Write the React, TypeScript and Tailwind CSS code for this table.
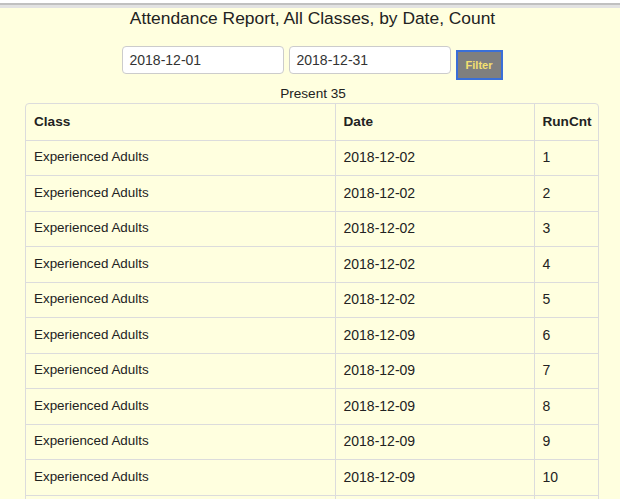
import React from "react";

const rows = [
  ["Experienced Adults", "2018-12-02", "1"],
  ["Experienced Adults", "2018-12-02", "2"],
  ["Experienced Adults", "2018-12-02", "3"],
  ["Experienced Adults", "2018-12-02", "4"],
  ["Experienced Adults", "2018-12-02", "5"],
  ["Experienced Adults", "2018-12-09", "6"],
  ["Experienced Adults", "2018-12-09", "7"],
  ["Experienced Adults", "2018-12-09", "8"],
  ["Experienced Adults", "2018-12-09", "9"],
  ["Experienced Adults", "2018-12-09", "10"],
  ["Experienced Adults", "2018-12-16", "11"],
];

export default function App() {
  return (
    <div
      className="w-[620px] h-[499px] overflow-hidden bg-[#ffffdf] text-[#222]"
      style={{ fontFamily: '"Liberation Sans", Arial, sans-serif' }}
    >
      <div className="h-[3px] bg-white" />
      <div className="h-[2px] bg-[#c0c0c0]" />
      <div className="h-[3px] bg-[#e2e2e2]" />
      <div className="flex flex-col items-center">
        <h1 className="text-[17.4px] leading-[20px] h-[20px] ml-[5px] text-[#222]">
          Attendance Report, All Classes, by Date, Count
        </h1>
        <div className="flex items-start gap-[5px] mt-[18px] ml-[4px]">
          <div className="w-[162px] h-[28px] bg-white border border-[#ccc] rounded-[4px] px-[7px] flex items-center text-[14px] text-[#333]">
            2018-12-01
          </div>
          <div className="w-[162px] h-[28px] bg-white border border-[#ccc] rounded-[4px] px-[7px] flex items-center text-[14px] text-[#333]">
            2018-12-31
          </div>
          <button className="mt-[4px] w-[47px] h-[30px] bg-[#7f7f7f] border-2 border-[#3a6fd8] text-[#f3e070] text-[11px] font-bold flex items-center justify-center">
            Filter
          </button>
        </div>
        <div className="text-[13.6px] leading-[16px] mt-[6px] ml-[6px] text-[#222]">Present 35</div>
        <div className="mt-[1px] w-[574px] ml-[4px] border border-[#dcdcdc] rounded-[4px] overflow-hidden">
          <table className="w-full table-fixed border-collapse text-[14px]">
            <colgroup>
              <col className="w-[309px]" />
              <col className="w-[199px]" />
              <col />
            </colgroup>
            <thead>
              <tr className="h-[36px]">
                <th className="text-left font-bold px-[8px] border-r border-[#dcdcdc] text-[13.6px]">Class</th>
                <th className="text-left font-bold px-[8px] border-r border-[#dcdcdc] text-[13.6px]">Date</th>
                <th className="text-left font-bold px-[8px] text-[13.6px]">RunCnt</th>
              </tr>
            </thead>
            <tbody>
              {rows.map((r, i) => (
                <tr key={i} className={i % 2 === 0 ? "h-[35px]" : "h-[36px]"}>
                  <td className="px-[8px] border-t border-r border-[#dcdcdc] text-[13.4px] whitespace-nowrap">{r[0]}</td>
                  <td className="px-[8px] border-t border-r border-[#dcdcdc] whitespace-nowrap">{r[1]}</td>
                  <td className="px-[8px] border-t border-[#dcdcdc] whitespace-nowrap">{r[2]}</td>
                </tr>
              ))}
            </tbody>
          </table>
        </div>
      </div>
    </div>
  );
}
